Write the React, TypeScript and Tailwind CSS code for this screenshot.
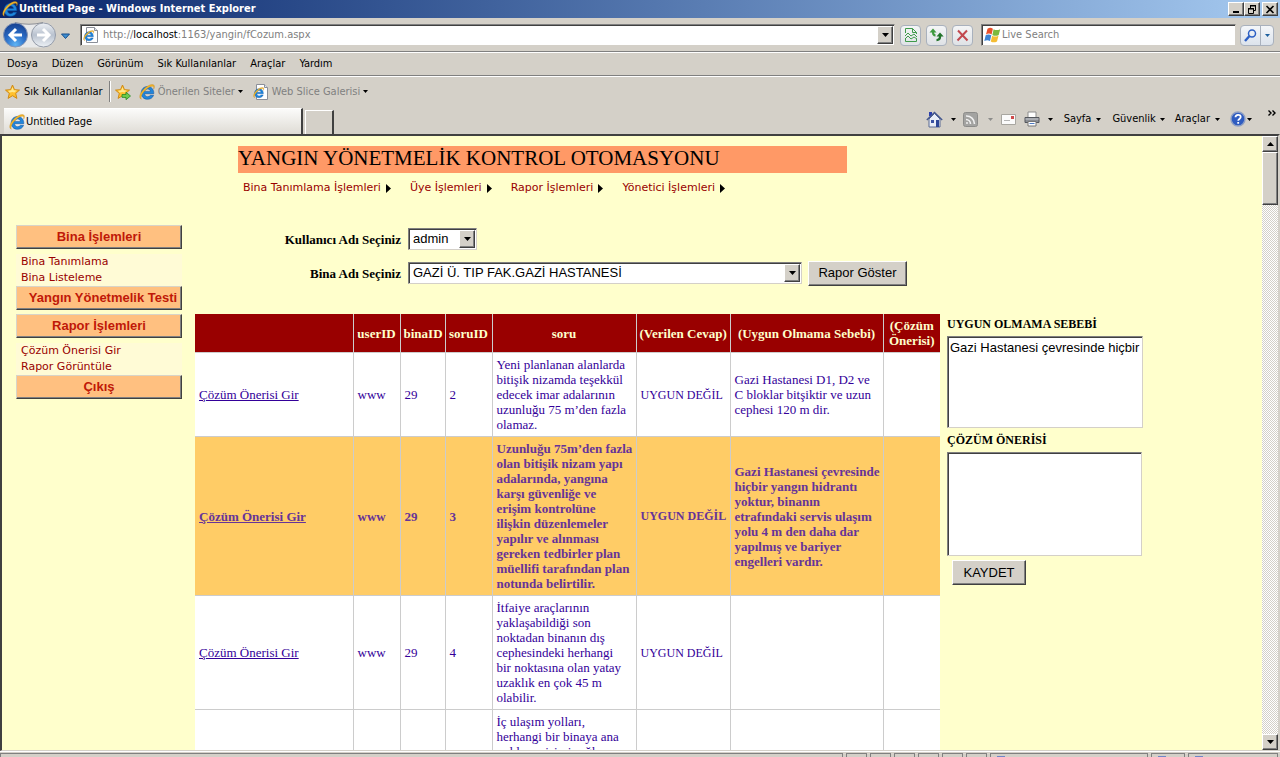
import type { ReactNode } from "react";

const tahoma = "font-['DejaVu_Sans_Condensed','DejaVu_Sans',sans-serif]";
const verdana = "font-['DejaVu_Sans',sans-serif]";
const arial = "font-['Liberation_Sans',sans-serif]";

const raised =
  "border border-t-white border-l-white border-r-[#404040] border-b-[#404040] bg-[#d4d0c8] shadow-[inset_-1px_-1px_0_#808080]";
const sunken =
  "border border-t-[#808080] border-l-[#808080] border-r-[#d4d0c8] border-b-[#d4d0c8] bg-white shadow-[inset_1px_1px_0_#404040]";

type Row = { user: string; bina: string; soru: string; text: string; answer: string; reason: string; selected?: boolean };

const rows: Row[] = [
  {
    user: "www",
    bina: "29",
    soru: "2",
    text: "Yeni planlanan alanlarda\nbitişik nizamda teşekkül\nedecek imar adalarının\nuzunluğu 75 m’den fazla\nolamaz.",
    answer: "UYGUN DEĞİL",
    reason: "Gazi Hastanesi D1, D2 ve\nC bloklar bitşiktir ve uzun\ncephesi 120 m dir.",
  },
  {
    user: "www",
    bina: "29",
    soru: "3",
    text: "Uzunluğu 75m’den fazla\nolan bitişik nizam yapı\nadalarında, yangına\nkarşı güvenliğe ve\nerişim kontrolüne\nilişkin düzenlemeler\nyapılır ve alınması\ngereken tedbirler plan\nmüellifi tarafından plan\nnotunda belirtilir.",
    answer: "UYGUN DEĞİL",
    reason: "Gazi Hastanesi çevresinde\nhiçbir yangın hidrantı\nyoktur, binanın\netrafındaki servis ulaşım\nyolu 4 m den daha dar\nyapılmış ve bariyer\nengelleri vardır.",
    selected: true,
  },
  {
    user: "www",
    bina: "29",
    soru: "4",
    text: "İtfaiye araçlarının\nyaklaşabildiği son\nnoktadan binanın dış\ncephesindeki herhangi\nbir noktasına olan yatay\nuzaklık en çok 45 m\nolabilir.",
    answer: "UYGUN DEĞİL",
    reason: "",
  },
  {
    user: "www",
    bina: "29",
    soru: "5",
    text: "İç ulaşım yolları,\nherhangi bir binaya ana\nyoldan erişimi sağlayan\nyollardır. Ana yollardan\nbinalara ulaşım için\nkullanılacak yolların\ngenişliği en az 4 m,\nçıkmaz sokaklarda ise\nen az 8 m olur.",
    answer: "UYGUN DEĞİL",
    reason: "",
  },
];

function IeShape() {
  return (
    <>
      <path
        d="M14.800 9.700H5.600c.1 1.900 1.400 3 3.100 3 1.200 0 2.100-.5 2.600-1.400h3.300c-1 2.600-3.100 4-6 4-3.800 0-6.400-2.600-6.400-6.400 0-3.700 2.700-6.400 6.400-6.400 3.900 0 6.400 3 6.200 7.200zM5.600 7.400h5.900C11.300 5.900 10.100 5 8.600 5 7.100 5 5.900 5.900 5.600 7.400z"
        fill="#1f86dc"
        stroke="#0c4f9e"
        strokeWidth=".5"
      />
      <path
        d="M2.400 15.200C-.8 14.200.9 9.100 4.700 5.200 8.400 1.400 13.300-.5 15 1.200c.7.8.5 2.200-.3 3.800.2-1.400.1-2.200-.5-2.600-1.400-.8-4.800.9-7.700 3.700-3.300 3.200-5.400 7.500-4.100 9.100z"
        fill="#f2b62c"
        stroke="#b67b10"
        strokeWidth=".3"
      />
    </>
  );
}

function IeLogo() {
  return (
    <svg width="16" height="16" viewBox="0 0 16 16" className="shrink-0">
      <IeShape />
    </svg>
  );
}

function PageLogo() {
  return (
    <svg width="16" height="16" viewBox="0 0 16 16" className="shrink-0">
      <path d="M3.500.5h8l3 3v12h-11z" fill="#fff" stroke="#8b8f98" />
      <path d="M11.500.5v3h3" fill="#dfe5ee" stroke="#8b8f98" />
      <g transform="translate(0 3) scale(.7)">
        <IeShape />
      </g>
    </svg>
  );
}

function Star({ arrow = false }: { arrow?: boolean }) {
  return (
    <svg width="16" height="16" viewBox="0 0 16 16" className="shrink-0">
      <path d="M7.500 1l2 4.700 5 .4-3.800 3.300 1.200 5-4.400-2.700-4.400 2.700 1.200-5L.5 6.100l5-.4z" fill="#ffc02c" stroke="#d08a14" />
      <path d="M7.500 3l1.200 3.300 3 .3-2.500 2-1.700-.6-2.800.5L3 6.700l3.200-.4z" fill="#ffe88c" />
      {arrow && <path d="M7 10.500h4V8.200l4.500 3.800-4.500 3.700v-2.300H7z" fill="#6ecb4c" stroke="#2b8a25" strokeWidth=".8" />}
    </svg>
  );
}

function Caret({ className = "fill-black" }: { className?: string }) {
  return (
    <svg width="5" height="3" viewBox="0 0 5 3" className={`shrink-0 ${className}`}>
      <path d="M0 0h5L2.500 3z" />
    </svg>
  );
}

function ScrollArrow({ up = false }: { up?: boolean }) {
  return (
    <svg width="7" height="4" viewBox="0 0 7 4">
      <path d={up ? "M0 4h7L3.500 0z" : "M0 0h7L3.500 4z"} />
    </svg>
  );
}

function TitleBar() {
  return (
    <header className="flex h-[18px] shrink-0 items-center bg-linear-to-r from-[#0a246a] to-[#a6caf0] pr-[2px] pl-[2px] text-white">
      <IeLogo />
      <h1 className="ml-px flex-1 text-[11px] leading-4 font-bold">Untitled Page - Windows Internet Explorer</h1>
      <button aria-label="Simge durumuna küçült" className={`flex h-[14px] w-4 items-center justify-center ${raised}`}>
        <svg width="10" height="9" viewBox="0 0 10 9">
          <path d="M2 6h6v2H2z" />
        </svg>
      </button>
      <button aria-label="Önceki boyut" className={`flex h-[14px] w-4 items-center justify-center ${raised}`}>
        <svg width="10" height="9" viewBox="0 0 10 9" fill="none" stroke="#000">
          <path d="M3 1h6M3.500 0v3M8.500 0v5.500H7M3 .5h6M1 4h6M1.500 3v5.500h5V3M1 3.500h6" />
        </svg>
      </button>
      <button aria-label="Kapat" className={`ml-[2px] flex h-[14px] w-4 items-center justify-center ${raised}`}>
        <svg width="10" height="9" viewBox="0 0 10 9" stroke="#000" strokeWidth="1.600">
          <path d="M1.500 1l7 7M8.500 1l-7 7" />
        </svg>
      </button>
    </header>
  );
}

function ToolButton({ label, children }: { label: string; children: ReactNode }) {
  return (
    <button
      aria-label={label}
      className="flex h-[21px] w-[21px] items-center justify-center rounded-sm border border-[#a9b1bd] bg-linear-to-b from-[#f4f5f6] to-[#dfe2e6]"
    >
      {children}
    </button>
  );
}

function AddressBar() {
  return (
    <div className="flex h-[34px] shrink-0 items-center border-b border-[#808080] pt-px pr-[6px] pl-[2px]">
      <svg width="70" height="30" viewBox="0 0 70 30" className="shrink-0">
        <defs>
          <radialGradient id="back" cx=".5" cy=".9" r=".9">
            <stop offset="0" stopColor="#5fb4f4" />
            <stop offset=".5" stopColor="#2a6cc6" />
            <stop offset="1" stopColor="#173f8e" />
          </radialGradient>
          <linearGradient id="forward" x2="0" y2="1">
            <stop offset="0" stopColor="#eef1f5" />
            <stop offset=".5" stopColor="#b9c2cf" />
            <stop offset="1" stopColor="#eef2f6" />
          </linearGradient>
        </defs>
        <path d="M14 2.500q13 3 27 0a12.500 12.500 0 0 1 0 25H14z" fill="#e8e9ea" />
        <path d="M13 2.500q14 3.500 28 0" fill="none" stroke="#8b8d94" />
        <circle cx="13.500" cy="15" r="12" fill="url(#back)" stroke="#8796b4" />
        <circle cx="41.500" cy="15" r="12" fill="url(#forward)" stroke="#949ba8" />
        <path d="M14 9l-6 6 6 6M8.500 15H20" fill="none" stroke="#fff" strokeWidth="3" />
        <path d="M41 9l6 6-6 6M46.500 15H35" fill="none" stroke="#fff" strokeWidth="3" />
        <path d="M59.500 14h8l-4 4.500z" fill="#3d8ed0" stroke="#194f8d" />
      </svg>
      <div className={`ml-2 flex h-[22px] flex-1 items-center pr-px pl-[2px] ${sunken}`}>
        <PageLogo />
        <p className="ml-[4px] flex-1 text-[11px] leading-4 text-[#808080]">
          http://<span className="text-black">localhost</span>:1163/yangin/fCozum.aspx
        </p>
        <button aria-label="Adresleri göster" className={`flex h-[18px] w-4 items-center justify-center ${raised}`}>
          <ScrollArrow />
        </button>
      </div>
      <div className="ml-[5px] flex gap-[5px]">
        <ToolButton label="Uyumluluk görünümü">
          <svg width="12" height="14" viewBox="0 0 12 14" fill="none" stroke="#3f9b4a">
            <path d="M.5 5V.5h7l4 4V6M7.500.5v4h4M.5 10v3.500h11V11" />
            <path d="M0 8l3-3 3 3 3-2 3 3M0 11l3-3 3 3 3-2 3 2" />
          </svg>
        </ToolButton>
        <ToolButton label="Yenile">
          <svg width="15" height="14" viewBox="0 0 15 14">
            <path d="M4 .5L.5 4.500H3c0 2.500 1 3.800 3.500 4V6.300C5.500 6 5.200 5.500 5.200 4.500h2.300z" fill="#3f9a3f" />
            <path d="M11 4.500l3.700 4h-2.500c0 3-1.500 4.500-4.700 4.800v-2.200c1.700-.3 2.400-1 2.400-2.600H7.500z" fill="#23742b" />
          </svg>
        </ToolButton>
        <ToolButton label="Durdur">
          <svg width="13" height="13" viewBox="0 0 13 13" stroke="#c2484f" strokeWidth="2">
            <path d="M2 1.500l9.500 10M11 1.500l-9.500 10" />
          </svg>
        </ToolButton>
      </div>
      <div className={`ml-2 flex h-[22px] w-[255px] items-center pl-[2px] ${sunken}`}>
        <svg width="17" height="16" viewBox="0 0 17 16" className="shrink-0">
          <path d="M3.500 1.700q2.700-1.700 5.400 0L7.600 7.400q-2.700-1.600-5.600 0z" fill="#e8502c" />
          <path d="M9.600 2.200q2.900 1.700 6.600 0l-1.500 5.700q-3.300 1.700-6.300 0z" fill="#7cb93e" />
          <path d="M1.700 8.300q2.800-1.500 5.600 0L6 14q-2.700-1.500-5.700 0z" fill="#3e84d4" />
          <path d="M8.200 8.700q2.900 1.700 6.300 0L13 14.400q-3.300 1.700-6.200 0z" fill="#f5bd33" />
        </svg>
        <input
          aria-label="Live Search"
          placeholder="Live Search"
          className="mx-px w-full text-[11px] leading-4 outline-none placeholder:text-[#808080]"
        />
      </div>
      <div className="ml-1 flex h-[21px] rounded-sm border border-[#a9b1bd] bg-linear-to-b from-[#f4f6f9] to-[#dce3ec]">
        <button aria-label="Ara" className="flex w-5 items-center justify-center border-r border-[#a9b1bd]">
          <svg width="13" height="13" viewBox="0 0 13 13" fill="none" stroke="#2c5fc4">
            <circle cx="8" cy="4.500" r="3.500" strokeWidth="1.500" />
            <path d="M5.500 7L1 12" strokeWidth="2.400" />
          </svg>
        </button>
        <button aria-label="Arama seçenekleri" className="flex w-3 items-center justify-center">
          <Caret className="fill-[#1d5f9e]" />
        </button>
      </div>
    </div>
  );
}

const menuItems = ["Dosya", "Düzen", "Görünüm", "Sık Kullanılanlar", "Araçlar", "Yardım"];

function MenuBar() {
  return (
    <nav className="flex h-6 shrink-0 items-center gap-[14px] border-t border-b border-t-white border-b-[#808080] px-[7px]">
      {menuItems.map((item) => (
        <button key={item} className="text-[11px] leading-4">
          {item}
        </button>
      ))}
    </nav>
  );
}

function LinksBar() {
  return (
    <div className="flex h-[30px] shrink-0 items-center border-t border-white pl-[5px] text-[11px] leading-4">
      <button className="flex items-center gap-[3px]">
        <Star />
        Sık Kullanılanlar
      </button>
      <span className="ml-[6px] h-[21px] w-[2px] border-r border-l border-r-white border-l-[#808080]" />
      <button aria-label="Sık kullanılanlara ekle" className="ml-1">
        <Star arrow />
      </button>
      <button className="ml-2 flex items-center gap-[3px] text-[#808080]">
        <IeLogo />
        Önerilen Siteler
        <Caret />
      </button>
      <button className="ml-[10px] flex items-center gap-[3px] text-[#808080]">
        <PageLogo />
        Web Slice Galerisi
        <Caret />
      </button>
    </div>
  );
}

function TabBar() {
  return (
    <div className="flex h-7 shrink-0 items-end pr-1 pl-1 text-[11px] leading-4">
      <button className="flex h-[26px] w-[299px] items-center border-t border-r-2 border-t-white border-r-[#404040] bg-linear-to-b from-[#fbfbfa] to-[#dfdcd5] pl-[5px]">
        <IeLogo />
        <span className="ml-px">Untitled Page</span>
      </button>
      <button
        aria-label="Yeni sekme"
        className="ml-[2px] h-6 w-[29px] border-t border-r-2 border-l border-t-white border-r-[#404040] border-l-white"
      />
      <div className="ml-auto flex h-full items-center pb-[2px]">
        <button aria-label="Giriş sayfası" className="flex items-center gap-2">
          <svg width="17" height="17" viewBox="0 0 17 17">
            <path d="M3 1h3v4H3z" fill="#2b3fae" />
            <path d="M3 8l5.500-5.500L14 8v8H3z" fill="#e9eef7" stroke="#5a6a94" />
            <path d="M.8 9l7.700-7.500L16.200 9" fill="none" stroke="#44578e" strokeWidth="1.400" />
            <path d="M5 9h3v3H5z" fill="#3b52a3" />
            <path d="M10 9h3v7h-3z" fill="#2e4798" />
          </svg>
          <Caret />
        </button>
        <button aria-label="Akışlar" className="ml-[7px] flex items-center gap-[10px]">
          <svg width="15" height="15" viewBox="0 0 15 15" fill="none" stroke="#f1f1f1" strokeWidth="1.600">
            <rect x=".5" y=".5" width="14" height="14" rx="2" fill="#a3a3a1" stroke="#8c8c8a" strokeWidth="1" />
            <path d="M3 7.500a4.500 4.500 0 0 1 4.500 4.500M3 4a8 8 0 0 1 8.500 8" />
            <circle cx="4" cy="11" r="1" fill="#f1f1f1" stroke="none" />
          </svg>
          <Caret className="fill-[#8c8c8a]" />
        </button>
        <button aria-label="Posta oku" className="ml-2">
          <svg width="15" height="11" viewBox="0 0 15 11">
            <path d="M.5.5h14v10H.5z" fill="#fbfbfb" stroke="#a8a6a0" />
            <path d="M10 2h3v3h-3z" fill="#cf4b4b" />
            <path d="M3 6.500h6" stroke="#b5b5b5" />
          </svg>
        </button>
        <button aria-label="Yazdır" className="ml-2 flex items-center gap-2">
          <svg width="16" height="16" viewBox="0 0 16 16">
            <path d="M4 1h8v6H4z" fill="#fff" stroke="#8d8d8d" />
            <path d="M1 6.500h14v5H1z" fill="#8b8e94" stroke="#54575d" />
            <path d="M1.500 8h13" stroke="#c9ccd1" />
            <path d="M4 10.500h8V15H4z" fill="#fff" stroke="#777" />
            <path d="M5.500 12.500h5" stroke="#4b78c2" />
          </svg>
          <Caret />
        </button>
        <button className="ml-[11px] flex items-center gap-[5px]">
          Sayfa <Caret />
        </button>
        <button className="ml-[11px] flex items-center gap-1">
          Güvenlik <Caret />
        </button>
        <button className="ml-[10px] flex items-center gap-[5px]">
          Araçlar <Caret />
        </button>
        <button aria-label="Yardım" className="ml-[10px] flex items-center gap-px">
          <svg width="16" height="16" viewBox="0 0 16 16">
            <circle cx="8" cy="8" r="7" fill="#2f5cc0" stroke="#8fa0c4" strokeWidth="1.400" />
            <path d="M5.500 6.300c0-3.300 5.200-3.300 5.200-.3 0 1.900-2.500 1.900-2.500 3.700M8.200 11v1.800" fill="none" stroke="#fff" strokeWidth="1.800" />
          </svg>
          <Caret />
        </button>
        <button aria-label="Diğer komutlar" className="mb-3 ml-4">
          <svg width="8" height="6" viewBox="0 0 8 6" fill="none" stroke="#000" strokeWidth="1.400">
            <path d="M.5.500L3 3 .5 5.500M4.500.500L7 3 4.500 5.500" />
          </svg>
        </button>
      </div>
    </div>
  );
}

function SideButton({ children }: { children: ReactNode }) {
  return (
    <button
      className={`block h-6 w-full border border-t-[#d8d4c8] border-r-[#404040] border-b-[#404040] border-l-[#d8d4c8] bg-[#ffc080] text-[13px] leading-4 font-bold whitespace-nowrap text-[#c01808] shadow-[inset_-1px_-1px_0_#808080] ${arial}`}
    >
      {children}
    </button>
  );
}

function SideLinks({ items }: { items: string[] }) {
  return (
    <ul className={`mt-[5px] bg-[#fffbd6] text-[11px] leading-4 text-[#990000] ${verdana}`}>
      {items.map((item) => (
        <li key={item} className="pl-[5px]">
          <a href="#">{item}</a>
        </li>
      ))}
    </ul>
  );
}

function Sidebar() {
  return (
    <aside className="mt-[89px] w-[166px] shrink-0">
      <SideButton>Bina İşlemleri</SideButton>
      <SideLinks items={["Bina Tanımlama", "Bina Listeleme"]} />
      <SideButton>
        <span className="pl-2">Yangın Yönetmelik Testi</span>
      </SideButton>
      <div className="h-1" />
      <SideButton>Rapor İşlemleri</SideButton>
      <SideLinks items={["Çözüm Önerisi Gir", "Rapor Görüntüle"]} />
      <SideButton>Çıkış</SideButton>
    </aside>
  );
}

const topMenu = ["Bina Tanımlama İşlemleri", "Üye İşlemleri", "Rapor İşlemleri", "Yönetici İşlemleri"];

function TopMenu() {
  return (
    <nav className={`mt-[7px] ml-12 flex gap-[19px] text-[11px] leading-4 text-[#990000] ${verdana}`}>
      {topMenu.map((item) => (
        <a key={item} href="#" className="flex items-center gap-[5px]">
          {item}
          <svg width="5" height="9" viewBox="0 0 5 9">
            <path d="M0 0l5 4.500L0 9z" fill="#000" />
          </svg>
        </a>
      ))}
    </nav>
  );
}

function Select({ id, value, width }: { id: string; value: string; width: string }) {
  return (
    <div className={`relative h-[22px] ${width}`}>
      <select id={id} className={`h-full w-full appearance-none pl-1 text-[13px] leading-4 ${arial} ${sunken}`}>
        <option>{value}</option>
      </select>
      <span className={`pointer-events-none absolute top-[2px] right-[2px] flex h-[18px] w-4 items-center justify-center ${raised}`}>
        <ScrollArrow />
      </span>
    </div>
  );
}

function Filters() {
  return (
    <form className="mt-[31px] flex flex-col gap-[9px] text-[13px] leading-[15px]">
      <div className="flex h-6 items-center gap-[7px]">
        <label htmlFor="user" className="w-[206px] text-right font-bold">
          Kullanıcı Adı Seçiniz
        </label>
        <Select id="user" value="admin" width="w-[69px]" />
      </div>
      <div className="flex h-[26px] items-center gap-[6px]">
        <label htmlFor="building" className="mr-px w-[206px] text-right font-bold">
          Bina Adı Seçiniz
        </label>
        <Select id="building" value="GAZİ Ü. TIP FAK.GAZİ HASTANESİ" width="w-[394px]" />
        <button type="button" className={`h-[25px] w-[99px] text-[13px] leading-4 ${arial} ${raised}`}>
          Rapor Göster
        </button>
      </div>
    </form>
  );
}

const columns = [
  { title: "", width: "w-[158px]" },
  { title: "userID", width: "w-[47px]" },
  { title: "binaID", width: "w-[45px]" },
  { title: "soruID", width: "w-[47px]" },
  { title: "soru", width: "w-[144px]" },
  { title: "(Verilen Cevap)", width: "w-[94px]" },
  { title: "(Uygun Olmama Sebebi)", width: "w-[153px]" },
  { title: "(Çözüm\nÖnerisi)", width: "w-[57px]" },
];

const cell = "border border-[#cccccc] py-1 whitespace-pre first:border-l-0 last:border-r-0";

function QuestionTable() {
  return (
    <table className="w-[745px] shrink-0 table-fixed border-collapse text-[13px] leading-[15px]">
      <thead>
        <tr className="bg-[#990000] text-[#ffffcc]">
          {columns.map((c) => (
            <th key={c.title} className={`border-t-0 px-[3px] text-center ${cell} ${c.width}`}>
              {c.title}
            </th>
          ))}
        </tr>
      </thead>
      <tbody>
        {rows.map((r) => (
          <tr key={r.soru} className={r.selected ? "bg-[#ffcc66] font-bold text-[#663399]" : "bg-white text-[#330099]"}>
            <td className={`px-1 ${cell}`}>
              <a href="#" className="underline">
                Çözüm Önerisi Gir
              </a>
            </td>
            <td className={`px-1 ${cell}`}>{r.user}</td>
            <td className={`px-1 ${cell}`}>{r.bina}</td>
            <td className={`px-1 ${cell}`}>{r.soru}</td>
            <td className={`px-1 ${cell}`}>{r.text}</td>
            <td className={`px-1 text-xs ${cell}`}>{r.answer}</td>
            <td className={`px-1 ${cell}`}>{r.reason}</td>
            <td className={`px-1 ${cell}`} />
          </tr>
        ))}
      </tbody>
    </table>
  );
}

function AnswerForm() {
  return (
    <form className="mt-[3px] ml-[7px] flex flex-col items-start">
      <label htmlFor="reason" className="text-[12px] leading-[15px] font-bold">
        UYGUN OLMAMA SEBEBİ
      </label>
      <textarea
        id="reason"
        wrap="off"
        defaultValue="Gazi Hastanesi çevresinde hiçbir"
        className={`mt-1 h-[92px] w-[196px] resize-none overflow-hidden px-[2px] pt-[3px] text-[13px] leading-4 ${arial} ${sunken}`}
      />
      <label htmlFor="solution" className="mt-[5px] text-[12px] leading-[15px] font-bold">
        ÇÖZÜM ÖNERİSİ
      </label>
      <textarea
        id="solution"
        className={`mt-1 h-[104px] w-[195px] resize-none px-[2px] pt-[3px] text-[13px] leading-4 ${arial} ${sunken}`}
      />
      <button type="button" className={`mt-1 ml-[5px] h-[25px] w-[74px] text-[13px] leading-4 ${arial} ${raised}`}>
        KAYDET
      </button>
    </form>
  );
}

function ScrollBar() {
  return (
    <div className="flex w-4 shrink-0 flex-col bg-[repeating-conic-gradient(#ffffff_0_25%,#d4d0c8_0_50%)] bg-size-[2px_2px]">
      <button aria-label="Yukarı kaydır" className={`flex h-4 items-center justify-center ${raised}`}>
        <ScrollArrow up />
      </button>
      <div className={`h-[53px] ${raised}`} />
      <button aria-label="Aşağı kaydır" className={`mt-auto flex h-4 items-center justify-center ${raised}`}>
        <ScrollArrow />
      </button>
    </div>
  );
}

const panes = ["w-[21px]", "w-[21px]", "w-[21px]", "w-[21px]", "w-[21px]", "w-[21px]", "w-[158px]", "w-[34px]", "w-[90px]"];

function StatusBar() {
  return (
    <footer className="flex h-[6px] shrink-0 gap-[3px] border-t border-white bg-[#d4d0c8] pt-px pr-[2px]">
      <div className="flex-1 border-t border-r border-l border-[#808080]" />
      {panes.map((w, i) => (
        <div key={i} className={`border-t border-r border-l border-[#808080] pt-[2px] pl-[6px] ${w}`}>
          {i > 5 && <div className="h-px w-2 bg-[#6f86c8]" />}
        </div>
      ))}
    </footer>
  );
}

export default function App() {
  return (
    <div className={`flex h-screen flex-col overflow-hidden bg-[#d4d0c8] text-black ${tahoma}`}>
      <TitleBar />
      <AddressBar />
      <MenuBar />
      <LinksBar />
      <TabBar />
      <div className="flex min-h-0 flex-1 border-t-2 border-r-2 border-b border-l-2 border-t-[#404040] border-r-[#d4d0c8] border-b-[#d4d0c8] border-l-[#404040]">
        <main className="flex min-w-0 flex-1 items-start overflow-hidden bg-[#ffffcc] pl-[14px] font-['Liberation_Serif',serif]">
          <Sidebar />
          <div className="ml-[13px] min-w-0 flex-1 pt-[10px]">
            <h2 className="ml-[43px] h-[27px] w-[609px] bg-[#ff9966] text-[21px] leading-6">
              YANGIN YÖNETMELİK KONTROL OTOMASYONU
            </h2>
            <TopMenu />
            <Filters />
            <div className="mt-7 flex items-start">
              <QuestionTable />
              <AnswerForm />
            </div>
          </div>
        </main>
        <ScrollBar />
      </div>
      <StatusBar />
    </div>
  );
}
